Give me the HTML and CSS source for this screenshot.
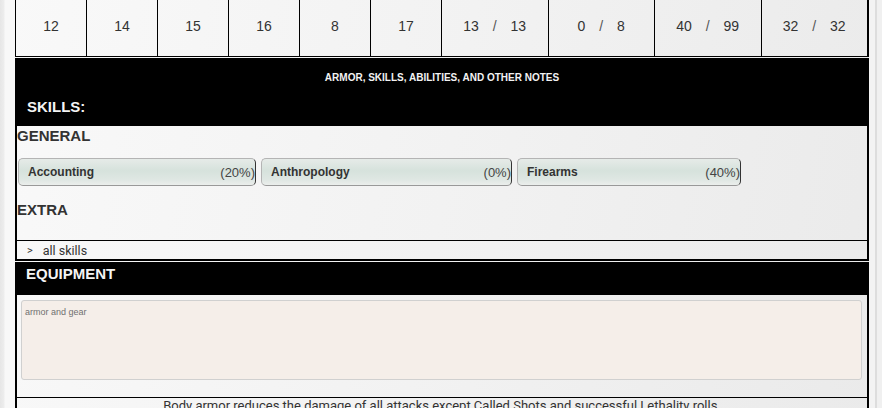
FILE: index.html
```html
<!DOCTYPE html>
<html>
<head>
<meta charset="utf-8">
<link rel="stylesheet" href="styles.css">
</head>
<body>
<div class="edge-left"></div>
<div class="sheet">
  <div class="stats">
    <div class="cell"><span>12</span></div>
    <div class="cell"><span>14</span></div>
    <div class="cell"><span>15</span></div>
    <div class="cell"><span>16</span></div>
    <div class="cell"><span>8</span></div>
    <div class="cell"><span>17</span></div>
    <div class="cell wide"><span>13 <span class="sl">/</span> 13</span></div>
    <div class="cell wide"><span>0 <span class="sl">/</span> 8</span></div>
    <div class="cell wide"><span>40 <span class="sl">/</span> 99</span></div>
    <div class="cell wide"><span>32 <span class="sl">/</span> 32</span></div>
  </div>
  <div class="black-head">
    <div class="sub-title">ARMOR, SKILLS, ABILITIES, AND OTHER NOTES</div>
    <div class="head-title">SKILLS:</div>
  </div>
  <div class="skills">
    <div class="group-title">GENERAL</div>
    <div class="skill-row">
      <div class="skill s1"><span class="sname">Accounting</span><span class="spct">(20%)</span></div>
      <div class="skill s2"><span class="sname">Anthropology</span><span class="spct">(0%)</span></div>
      <div class="skill s3"><span class="sname">Firearms</span><span class="spct">(40%)</span></div>
    </div>
    <div class="group-title extra">EXTRA</div>
  </div>
  <div class="all-skills"><span class="arrow">&gt;</span><span>all skills</span></div>
  <div class="black-head equip">
    <div class="head-title">EQUIPMENT</div>
  </div>
  <div class="equip-body">
    <div class="gear">armor and gear</div>
  </div>
  <div class="note">Body armor reduces the damage of all attacks except Called Shots and successful Lethality rolls.</div>
</div>
<div class="edge-right"></div>
</body>
</html>
```

FILE: styles.css
```css
html, body {
  margin: 0;
  height: 408px;
  overflow: hidden;
}
body {
  display: flex;
  font-family: "Liberation Sans", Arial, sans-serif;
  color: #333;
  background: linear-gradient(100deg, #f9f9f9 0%, #f2f2f2 50%, #eaeaea 100%);
}
.edge-left {
  width: 15px;
  flex: none;
  background: linear-gradient(90deg, #e6e6e6 0px, #ededed 4px, #f8f8f8 5px, #f8f8f8 15px);
}
.edge-right {
  flex: none;
  width: 13px;
  background: linear-gradient(90deg, #f3f3f3 0px, #f3f3f3 6px, #dddddd 6px, #dddddd 8px, #f0f0f0 8px);
}
.sheet {
  width: 854px;
  flex: none;
  display: flex;
  flex-direction: column;
}
.sheet > * { flex-shrink: 0; }
.stats {
  display: flex;
  height: 56px;
  border: 1px solid #000;
  border-top: none;
  border-right-width: 2px;
  margin-bottom: 1px;
}
.cell {
  width: 71px;
  flex: none;
  border-right: 1px solid #000;
  display: flex;
  align-items: center;
  justify-content: center;
  font-size: 14px;
  color: #333;
  padding-bottom: 5px;
  box-sizing: border-box;
}
.cell.wide {
  flex: 1 1 0;
  width: auto;
  word-spacing: 10px;
}
.cell:last-child { border-right: none; }
.sl { color: #555; }
.black-head {
  background: #000;
  color: #fff;
  height: 68px;
  display: flex;
  flex-direction: column;
}
.sub-title {
  font-size: 10px;
  font-weight: bold;
  text-align: center;
  padding-top: 14px;
  color: #f2f2f2;
}
.head-title {
  font-size: 15px;
  font-weight: bold;
  padding-left: 12px;
  margin-top: 15px;
  color: #f4f4f4;
}
.skills {
  border-left: 2px solid #000;
  border-right: 2px solid #000;
  border-bottom: 1px solid #000;
  height: 115px;
  box-sizing: border-box;
}
.group-title {
  font-size: 15px;
  font-weight: bold;
  color: #333;
  padding-top: 1px;
  height: 17px;
  line-height: 17px;
}
.group-title.extra { padding-top: 0; margin-top: 15px; }
.skill-row {
  display: flex;
  gap: 5px;
  margin-top: 14px;
  padding-left: 1px;
}
.skill {
  height: 28px;
  box-sizing: border-box;
  border: 1px solid #b4b4b4;
  border-right-color: #333;
  border-bottom-color: #999;
  border-radius: 5px;
  background: linear-gradient(180deg, #e6ebe8 0%, #d6e2dc 45%, #dfe7e3 80%, #ebeeec 100%);
  display: flex;
  align-items: center;
  justify-content: space-between;
  padding-left: 9px;
  font-size: 12px;
}
.s1 { width: 238px; }
.s2 { width: 251px; }
.s3 { width: 224px; }
.sname { font-weight: bold; color: #333; }
.spct { color: #444; font-size: 13px; }
.all-skills {
  border-left: 2px solid #000;
  border-right: 2px solid #000;
  border-bottom: 2px solid #000;
  height: 18px;
  font-family: Roboto, "Liberation Sans", sans-serif;
  font-size: 12.5px;
  color: #333;
  display: flex;
  align-items: center;
  margin-bottom: 1px;
}
.arrow {
  margin-left: 10px;
  margin-right: 10px;
  font-size: 11px;
}
.black-head.equip {
  height: 33px;
}
.equip .head-title {
  margin-top: 3px;
  padding-left: 11px;
}
.equip-body {
  border-left: 2px solid #000;
  border-right: 2px solid #000;
  padding: 5px 5px 17px 4px;
}
.gear {
  border: 1px solid #d0d0d0;
  border-radius: 3px;
  background: #f5eee9;
  font-size: 9px;
  color: #707070;
  padding: 6px 3px;
  box-sizing: border-box;
  height: 80px;
}
.note {
  border: 1px solid #000;
  border-left-width: 2px;
  border-right-width: 2px;
  border-bottom: none;
  text-align: center;
  font-family: Roboto, "Liberation Sans", sans-serif;
  font-size: 13px;
  color: #333;
  line-height: 16px;
}
```
